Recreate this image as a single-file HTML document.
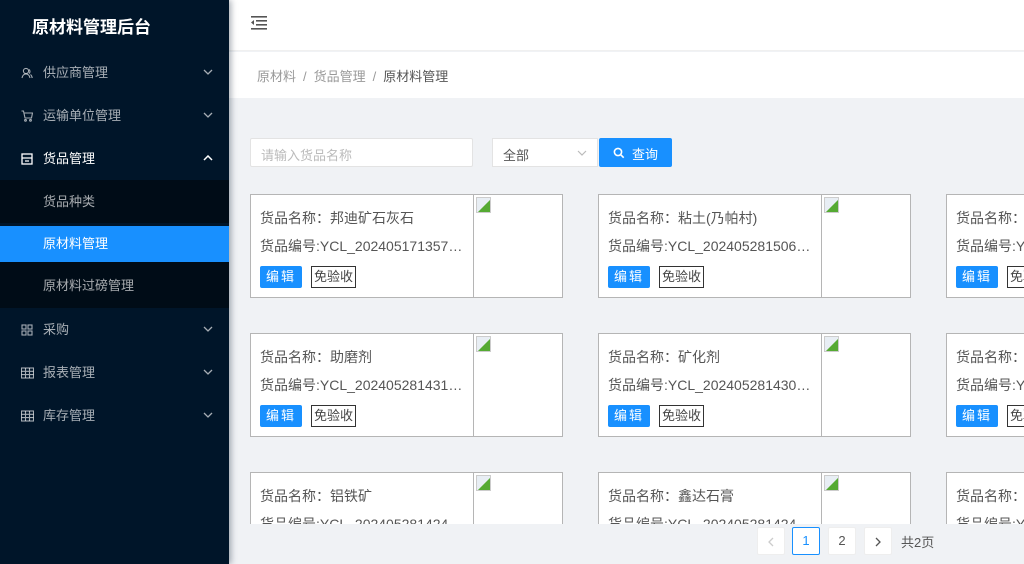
<!DOCTYPE html>
<html><head><meta charset="utf-8"><style>
*{margin:0;padding:0;box-sizing:border-box}
body{width:1024px;height:564px;overflow:hidden;background:#f0f2f5;font-family:"Liberation Sans","Noto Sans CJK SC",sans-serif;position:relative}
.side{position:absolute;left:0;top:0;width:229px;height:564px;background:#001529;box-shadow:2px 0 6px rgba(0,21,41,.35);z-index:2}
.logo{position:absolute;left:32px;top:13px;color:#fff;font-size:17px;font-weight:bold}
.mi{position:absolute;left:0;width:229px;height:43px;color:rgba(255,255,255,.65);font-size:13px;line-height:43px;padding-left:43px}
.mi svg.ic{position:absolute;left:21px;top:16px}
.mi svg.ar{position:absolute;right:16px;top:18px}
.sub{background:#000c17}
.act{background:#1890ff;color:#fff}
.hdr{position:absolute;left:229px;top:0;right:0;height:51px;background:#fff;border-bottom:1px solid #f0f0f0}
.bc{position:absolute;left:229px;top:52px;right:0;height:46px;background:#fff;font-size:13px;color:#999;padding:14px 0 0 28px}
.bc b{font-weight:normal;color:#555}
.bc i{font-style:normal;margin:0 7px}
.inp{position:absolute;left:250px;top:138px;width:223px;height:29px;background:#fff;border:1px solid #e3e3e3;border-radius:2px;color:#bbb;font-size:13px;padding:6px 10px}
.sel{position:absolute;left:492px;top:138px;width:106px;height:29px;background:#fff;border:1px solid #e3e3e3;font-size:13px;color:#555;padding:6px 10px}
.btn{position:absolute;left:599px;top:138px;width:73px;height:29px;background:#1890ff;color:#fff;font-size:13px;padding:6px 0 0 33px;border-radius:2px}
.scroll{position:absolute;left:229px;top:180px;right:0;height:344px;overflow:hidden}
.card{position:absolute;width:313px;height:104px;background:#fff;border:1px solid #b5b5b5}
.card .t{position:absolute;left:9px;top:13px;font-size:14px;color:#555;white-space:nowrap}
.card .c{position:absolute;left:9px;top:41px;font-size:14px;color:#555;white-space:nowrap;width:205px;overflow:hidden;text-overflow:ellipsis}
.card .e{position:absolute;left:9px;top:71px;width:42px;height:22px;background:#1890ff;color:#fff;font-size:13px;text-align:center;line-height:22px;letter-spacing:2px;border-radius:2px}
.card .m{position:absolute;left:60px;top:71px;width:45px;height:22px;border:1px solid #333;color:#444;font-size:13px;text-align:center;line-height:20px}
.card .img{position:absolute;left:222px;top:0;width:89px;height:102px;border-left:1px solid #b5b5b5}
.card .img:before{content:"";position:absolute;left:2px;top:2px;width:13px;height:14px;border:1px solid #ccc;background:linear-gradient(135deg,#e8eef4 55%,#5a3 56%)}
.pg{position:absolute;top:527px;width:28px;height:28px;background:#fff;border:1px solid #eee;border-radius:2px;font-size:13px;text-align:center;line-height:26px;color:#555}
</style></head><body>
<div class="side">
<div class="logo">原材料管理后台</div>
<div class="mi" style="top:51px"><svg class="ic" width="12" height="12" viewBox="0 0 12 12" fill="none" stroke="currentColor" stroke-width="1.1"><circle cx="5" cy="4" r="2.6"/><path d="M1 11c.5-2.5 2-4 4-4s3.5 1.5 4 4M8 2.5a2.5 2.5 0 0 1 0 4M9.5 7.5c1 .8 1.5 2 1.7 3.5"/></svg>供应商管理<svg class="ar" width="10" height="6" viewBox="0 0 10 6" fill="none" stroke="currentColor" stroke-width="1.3"><path d="M1 1l4 4 4-4"/></svg></div>
<div class="mi" style="top:94px"><svg class="ic" width="12" height="12" viewBox="0 0 12 12" fill="none" stroke="currentColor" stroke-width="1.1"><path d="M0.5 1h2l1.5 7h6.5l1-5H3"/><circle cx="4.5" cy="10.3" r=".9"/><circle cx="9.5" cy="10.3" r=".9"/></svg>运输单位管理<svg class="ar" width="10" height="6" viewBox="0 0 10 6" fill="none" stroke="currentColor" stroke-width="1.3"><path d="M1 1l4 4 4-4"/></svg></div>
<div class="mi" style="top:137px;color:#fff"><svg class="ic" width="12" height="12" viewBox="0 0 12 12" fill="none" stroke="currentColor" stroke-width="1.3"><rect x="1" y="1" width="10" height="10"/><path d="M1 5h10M4 8h4"/></svg>货品管理<svg class="ar" width="10" height="6" viewBox="0 0 10 6" fill="none" stroke="currentColor" stroke-width="1.5"><path d="M1 5l4-4 4 4"/></svg></div>
<div class="mi sub" style="top:180px">货品种类</div>
<div class="mi act" style="top:226px;height:36px;line-height:36px">原材料管理</div>
<div class="mi sub" style="top:262px;height:46px;line-height:48px">原材料过磅管理</div>
<div class="mi" style="top:308px"><svg class="ic" width="12" height="12" viewBox="0 0 12 12" fill="none" stroke="currentColor" stroke-width="1.1"><rect x="1" y="1" width="4" height="4"/><rect x="7" y="1" width="4" height="4"/><rect x="1" y="7" width="4" height="4"/><rect x="7" y="7" width="4" height="4"/></svg>采购<svg class="ar" width="10" height="6" viewBox="0 0 10 6" fill="none" stroke="currentColor" stroke-width="1.3"><path d="M1 1l4 4 4-4"/></svg></div>
<div class="mi" style="top:351px"><svg class="ic" width="13" height="12" viewBox="0 0 13 12" fill="none" stroke="currentColor" stroke-width="1.1"><rect x=".5" y="1" width="12" height="10"/><path d="M.5 4.3h12M.5 7.6h12M4.5 1v10M8.5 1v10"/></svg>报表管理<svg class="ar" width="10" height="6" viewBox="0 0 10 6" fill="none" stroke="currentColor" stroke-width="1.3"><path d="M1 1l4 4 4-4"/></svg></div>
<div class="mi" style="top:394px"><svg class="ic" width="13" height="12" viewBox="0 0 13 12" fill="none" stroke="currentColor" stroke-width="1.1"><rect x=".5" y="1" width="12" height="10"/><path d="M.5 4.3h12M.5 7.6h12M4.5 1v10M8.5 1v10"/></svg>库存管理<svg class="ar" width="10" height="6" viewBox="0 0 10 6" fill="none" stroke="currentColor" stroke-width="1.3"><path d="M1 1l4 4 4-4"/></svg></div>
</div>
<div class="hdr"><svg style="position:absolute;left:22px;top:15px" width="16" height="15" viewBox="0 0 16 15" fill="#555"><rect x="0" y="1" width="16" height="1.6"/><rect x="5" y="5" width="11" height="1.6"/><rect x="5" y="9" width="11" height="1.6"/><rect x="0" y="13" width="16" height="1.6"/><path d="M0 7.5l3-2.5v5z"/></svg></div>
<div class="bc">原材料<i>/</i>货品管理<i>/</i><b>原材料管理</b></div>
<div class="inp">请输入货品名称</div>
<div class="sel">全部<svg style="position:absolute;right:10px;top:11px" width="10" height="6" viewBox="0 0 10 6" fill="none" stroke="#bbb" stroke-width="1.2"><path d="M1 1l4 4 4-4"/></svg></div>
<div class="btn"><svg style="position:absolute;left:14px;top:9px" width="12" height="12" viewBox="0 0 12 12" fill="none" stroke="#fff" stroke-width="1.6"><circle cx="5" cy="5" r="3.6"/><path d="M7.7 7.7l3 3"/></svg>查询</div>
<div class="scroll">
<div class="card" style="left:21px;top:14px"><div class="t">货品名称：邦迪矿石灰石</div><div class="c">货品编号:YCL_20240517135790000</div><div class="e">编辑</div><div class="m">免验收</div><div class="img"></div></div>
<div class="card" style="left:369px;top:14px"><div class="t">货品名称：粘土(乃帕村)</div><div class="c">货品编号:YCL_20240528150620000</div><div class="e">编辑</div><div class="m">免验收</div><div class="img"></div></div>
<div class="card" style="left:717px;top:14px"><div class="t">货品名称：</div><div class="c">货品编号:YCL</div><div class="e">编辑</div><div class="m">免验收</div><div class="img"></div></div>
<div class="card" style="left:21px;top:153px"><div class="t">货品名称：助磨剂</div><div class="c">货品编号:YCL_20240528143120000</div><div class="e">编辑</div><div class="m">免验收</div><div class="img"></div></div>
<div class="card" style="left:369px;top:153px"><div class="t">货品名称：矿化剂</div><div class="c">货品编号:YCL_20240528143020000</div><div class="e">编辑</div><div class="m">免验收</div><div class="img"></div></div>
<div class="card" style="left:717px;top:153px"><div class="t">货品名称：</div><div class="c">货品编号:YCL</div><div class="e">编辑</div><div class="m">免验收</div><div class="img"></div></div>
<div class="card" style="left:21px;top:292px"><div class="t">货品名称：铝铁矿</div><div class="c">货品编号:YCL_20240528142480000</div><div class="e">编辑</div><div class="m">免验收</div><div class="img"></div></div>
<div class="card" style="left:369px;top:292px"><div class="t">货品名称：鑫达石膏</div><div class="c">货品编号:YCL_20240528142460000</div><div class="e">编辑</div><div class="m">免验收</div><div class="img"></div></div>
<div class="card" style="left:717px;top:292px"><div class="t">货品名称：</div><div class="c">货品编号:YCL</div><div class="e">编辑</div><div class="m">免验收</div><div class="img"></div></div>
</div>
<div class="pg" style="left:757px"><svg style="margin-top:9px" width="6" height="10" viewBox="0 0 6 10" fill="none" stroke="#ccc" stroke-width="1.3"><path d="M5 1L1 5l4 4"/></svg></div>
<div class="pg" style="left:792px;border-color:#1890ff;color:#1890ff">1</div>
<div class="pg" style="left:828px">2</div>
<div class="pg" style="left:864px"><svg style="margin-top:9px" width="6" height="10" viewBox="0 0 6 10" fill="none" stroke="#555" stroke-width="1.3"><path d="M1 1l4 4-4 4"/></svg></div>
<div style="position:absolute;left:901px;top:532px;font-size:13px;color:#555">共2页</div>
</body></html>
